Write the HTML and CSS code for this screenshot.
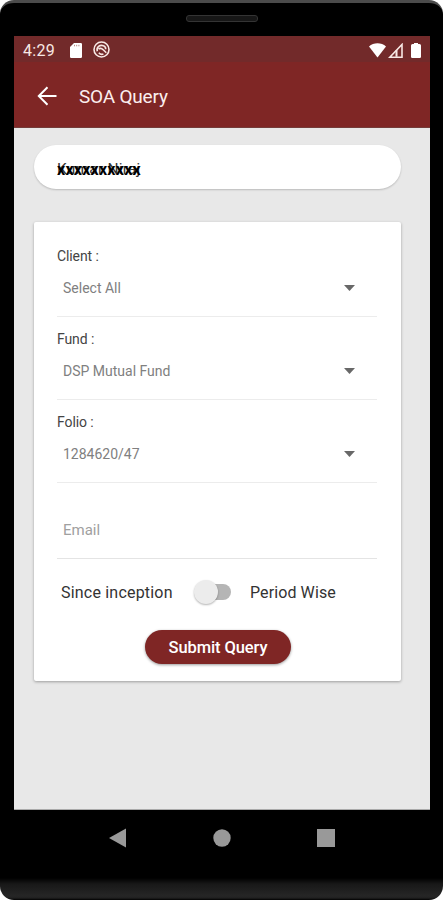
FILE: index.html
```html
<!DOCTYPE html>
<html lang="en">
<head>
<meta charset="utf-8">
<title>SOA Query</title>
<link rel="stylesheet" href="styles.css">
</head>
<body>
<div class="phone">
  <div class="bezel"><div class="speaker"></div></div>
  <main class="screen">
    <div class="status">
      <span class="clock">4:29</span>
      <svg class="sd" width="12" height="15" viewBox="0 0 12 15"><path d="M4 0h6.800a1.200 1.200 0 0 1 1.200 1.200v12.600a1.200 1.200 0 0 1-1.200 1.200H1.200A1.200 1.200 0 0 1 0 13.800V4z" fill="#fff"/><path d="M4.500 1.800v1.500M6.700 1.800v1.500M8.900 1.800v1.500" stroke="#b58a88" stroke-width="1"/></svg>
      <svg class="sync" width="17" height="17" viewBox="0 0 17 17" fill="none" stroke="#f8e8e4"><circle cx="8.500" cy="8.500" r="7.500" stroke-width="1.600"/><path d="M4.300 10.300C3 6 7 3.300 10.500 4.800c1.500.6 2.300 2 2.200 3.500M5.500 8c2-1.500 3.500-.5 5 1l2.800 2.800M5.800 11.800c1.200 1.400 3 1.900 4.600 1.200" stroke-width="1.600"/></svg>
      <span class="spacer"></span>
      <svg class="wifi" width="17" height="15" viewBox="0 0 17 15"><path d="M0 3.500C4.500-.9 12.500-.9 17 3.500L8.500 14.500z" fill="#fff"/></svg>
      <svg class="signal" width="15" height="15" viewBox="0 0 15 15"><path d="M1.800 14.200H14V1.500z" fill="none" stroke="#f8e8e4" stroke-width="1.600"/><path d="M8.500 7.200v6.500" stroke="#f8e8e4" stroke-width="2"/></svg>
      <svg class="battery" width="10" height="15" viewBox="0 0 10 15"><path d="M3 0h4v1h1.500A1.500 1.500 0 0 1 10 2.500v11.300A1.200 1.200 0 0 1 8.800 15H1.200A1.200 1.200 0 0 1 0 13.800V2.500a1.500 1.500 0 0 1 1.500-1.500H3z" fill="#fff"/></svg>
    </div>
    <header class="appbar">
      <svg width="20" height="20" viewBox="0 0 20 20" fill="none" stroke="#fff" stroke-width="2"><path d="M19.500 10H2M10.500 1.300L1.800 10l8.700 8.700"/></svg>
      <h1>SOA Query</h1>
    </header>
    <section class="content">
      <div class="name"><span class="original">Kumar Niraj</span><span class="mask">xxxxxxxxxx</span></div>
      <form class="card">
        <div class="field"><label>Client :</label><div class="select"><span>Select All</span><i></i></div></div>
        <div class="field"><label>Fund :</label><div class="select"><span>DSP Mutual Fund</span><i></i></div></div>
        <div class="field"><label>Folio :</label><div class="select"><span>1284620/47</span><i></i></div></div>
        <div class="email">Email</div>
        <div class="range"><span class="since">Since inception</span><span class="toggle"></span><span class="period">Period Wise</span></div>
        <button type="button">Submit Query</button>
      </form>
    </section>
  </main>
  <nav class="nav">
    <svg width="18" height="20" viewBox="0 0 18 20"><path d="M0 10L17 .5v19z" fill="#999"/></svg>
    <svg width="18" height="18" viewBox="0 0 18 18"><circle cx="9" cy="9" r="8.700" fill="#999"/></svg>
    <svg width="18" height="18" viewBox="0 0 18 18"><path d="M0 0h18v18H0z" fill="#999"/></svg>
  </nav>
</div>
</body>
</html>
```
FILE: styles.css
```css
* { box-sizing: border-box; }
body { margin: 0; background: #fff; font-family: Roboto, sans-serif; }
.phone { width: 443px; height: 900px; padding: 0 13px 0 14px; border-radius: 14px; border-top: 3px solid #4b4b4b; overflow: hidden; background: linear-gradient(#000 0, #000 875px, #181818 881px, #262626 893px, #202020 895px, #000 897px); }
.bezel { height: 33px; display: flex; justify-content: center; padding-top: 12px; }
.speaker { width: 72px; height: 7px; border: 1px solid #343434; border-radius: 3px; background: #171717; }
.screen { height: 774px; background: #e8e8e8; border-bottom: 1px solid #aaa; }
.status { height: 26px; padding: 0 9px; display: flex; align-items: center; background: #722a2a; color: #f8e8e4; }
.clock { width: 47px; font-size: 16px; letter-spacing: .3px; padding-top: 3px; line-height: 23px; }
.status svg { margin-top: 2px; }
.status .sync { margin-left: 11px; margin-top: 1px; }
.spacer { flex: 1; }
.signal { margin-left: 2px; }
.battery { margin-left: 8px; }
.appbar { height: 66px; padding: 3px 0 0 23px; display: flex; align-items: center; gap: 22px; background: #7f2625; color: #fbeeee; border-bottom: 1px solid #743c3a; }
.appbar svg { margin-top: -1px; }
h1 { margin: 2px 0 0; font-size: 19px; font-weight: 400; line-height: 24px; letter-spacing: -.2px; }
.content { padding: 17px 29px 0 20px; }
.name { height: 44px; border-radius: 22px; background: #fff; box-shadow: 0 1px 2px rgba(0,0,0,.2); padding: 14px 23px; display: grid; font-size: 15.500px; line-height: 20px; color: #333; }
.name span { grid-area: 1 / 1; }
.original { letter-spacing: .2px; }
.name .mask { padding-top: 1px; color: #000; font-size: 16px; font-weight: 700; letter-spacing: .25px; }
.card { height: 459px; margin-top: 33px; padding: 22px 24px 0 23px; background: #fff; border-radius: 2px; box-shadow: 0 1px 3px rgba(0,0,0,.32); display: flex; flex-direction: column; }
.field { height: 83px; flex: none; }
label { display: block; height: 24px; line-height: 24px; font-size: 14px; letter-spacing: -.1px; color: #444; }
.select { height: 50px; padding: 9px 22px 0 6px; display: flex; justify-content: space-between; border-bottom: 1px solid #ececec; font-size: 14px; line-height: 24px; color: #808080; }
.field .select { margin-top: -1px; }
.select i { width: 11px; height: 6px; margin-top: 9px; background: #686868; clip-path: polygon(0 0,100% 0,50% 100%); }
.email { height: 66px; padding: 25px 6px 0; border-bottom: 1px solid #e4e4e4; font-size: 15px; line-height: 24px; color: #a0a0a0; }
.range { height: 24px; margin-top: 21px; padding-left: 4px; display: flex; align-items: center; font-size: 16px; color: #333; }
.since { width: 133px; white-space: nowrap; letter-spacing: .2px; }
.toggle { width: 37px; height: 24px; display: flex; align-items: center; }
.toggle::before { content: ""; width: 24px; height: 24px; border-radius: 50%; background: #ececec; box-shadow: 0 1px 2px rgba(0,0,0,.3); z-index: 1; }
.toggle::after { content: ""; width: 25px; height: 16px; margin-left: -12px; border-radius: 8px; background: #b5b5b5; }
.period { margin-left: 19px; white-space: nowrap; letter-spacing: .1px; }
button { width: 146px; height: 34px; margin: 26px 0 0 88px; padding: 1px 0 0; border: 0; border-radius: 17px; background: #7f2625; color: #fff; font: 500 16.500px/24px Roboto, sans-serif; letter-spacing: -.1px; white-space: nowrap; box-shadow: 0 1px 3px rgba(0,0,0,.4); }
.nav { height: 55px; padding: 0 95px; display: flex; justify-content: space-between; align-items: center; }
```
